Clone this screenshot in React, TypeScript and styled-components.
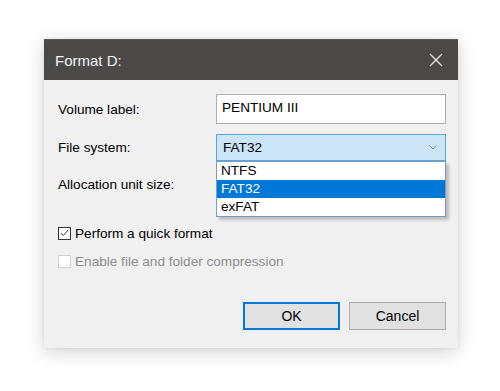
import React from 'react';
import styled, { createGlobalStyle } from 'styled-components';

const GlobalStyle = createGlobalStyle`
  html, body {
    margin: 0;
    padding: 0;
    background: #fff;
  }
  body {
    font-family: 'Liberation Sans', Arial, sans-serif;
  }
`;

const Page = styled.main`
  width: 500px;
  height: 391px;
  padding: 39px 0 0 44px;
  box-sizing: border-box;
`;

const Dialog = styled.section`
  width: 414px;
  height: 309px;
  background: #f0f0f0;
  box-shadow: 0 4px 18px rgba(0, 0, 0, 0.18), 0 0 3px rgba(0, 0, 0, 0.08);
  display: flex;
  flex-direction: column;
`;

const TitleBar = styled.header`
  height: 41px;
  background: #4b4a48;
  display: flex;
  align-items: center;
  justify-content: space-between;
  padding: 0 12px 0 11px;
  color: #f2f2f2;
  font-size: 15px;
  border-top: 1px solid #5a5958;
  box-sizing: border-box;
`;

const CloseButton = styled.button`
  width: 20px;
  height: 20px;
  padding: 0;
  border: none;
  background: none;
  display: flex;
  align-items: center;
  justify-content: center;
`;

const Body = styled.div`
  flex: 1;
  padding: 14px 12px 18px 14px;
  display: flex;
  flex-direction: column;
  font-size: 13.6px;
  color: #000;
`;

const Row = styled.div<{ $gap?: number }>`
  display: grid;
  grid-template-columns: 158px 230px;
  align-items: center;
  margin-bottom: ${(p) => p.$gap ?? 10}px;
`;

const Label = styled.label`
  white-space: nowrap;
`;

const TextInput = styled.div`
  height: 30px;
  box-sizing: border-box;
  border: 1px solid #adadad;
  background: #fff;
  padding: 4px 5px;
  line-height: 18px;
`;

const ComboWrap = styled.div`
  position: relative;
`;

const Combo = styled.div<{ $active?: boolean }>`
  height: 27px;
  box-sizing: border-box;
  border: 1px solid ${(p) => (p.$active ? '#5fa3dd' : '#adadad')};
  background: ${(p) => (p.$active ? '#cce4f7' : '#e5e5e5')};
  display: flex;
  align-items: center;
  justify-content: space-between;
  padding: 0 8px 0 6px;
`;

const DropList = styled.ul`
  position: absolute;
  left: 0;
  top: 27px;
  width: 230px;
  margin: 0;
  padding: 0;
  list-style: none;
  background: #fff;
  border: 1px solid #7a9cc0;
  box-sizing: border-box;
  box-shadow: 3px 3px 3px rgba(0, 0, 0, 0.22);
  z-index: 2;
`;

const DropItem = styled.li<{ $selected?: boolean }>`
  height: 18px;
  line-height: 18px;
  padding: 0 4px;
  background: ${(p) => (p.$selected ? '#0078d7' : '#fff')};
  color: ${(p) => (p.$selected ? '#fff' : '#000')};
`;

const CheckRow = styled.div<{ $disabled?: boolean }>`
  display: flex;
  align-items: center;
  gap: 4px;
  height: 20px;
  margin-bottom: 8px;
  color: ${(p) => (p.$disabled ? '#8e8e8e' : '#000')};
`;

const Box = styled.span<{ $disabled?: boolean }>`
  width: 13px;
  height: 13px;
  box-sizing: border-box;
  border: 1px solid ${(p) => (p.$disabled ? '#d2d2d2' : '#333')};
  background: #fff;
  display: flex;
  align-items: center;
  justify-content: center;
`;

const Buttons = styled.div`
  margin-top: auto;
  display: flex;
  justify-content: flex-end;
  gap: 9px;
`;

const Button = styled.button<{ $primary?: boolean }>`
  width: 97px;
  height: 28px;
  box-sizing: border-box;
  border: 1px solid ${(p) => (p.$primary ? '#0078d7' : '#adadad')};
  ${(p) => (p.$primary ? 'box-shadow: inset 0 0 0 1px #0078d7;' : '')}
  background: #e1e1e1;
  font-family: inherit;
  font-size: 14px;
  color: #000;
  padding: 0;
`;

export default function App() {
  return (
    <>
      <GlobalStyle />
      <Page>
        <Dialog>
          <TitleBar>
            <span>Format D:</span>
            <CloseButton aria-label="Close">
              <svg width="14" height="14" viewBox="0 0 14 14">
                <path d="M1 1 L13 13 M13 1 L1 13" stroke="#e8e8e8" strokeWidth="1.2" />
              </svg>
            </CloseButton>
          </TitleBar>
          <Body>
            <Row>
              <Label>Volume label:</Label>
              <TextInput>PENTIUM III</TextInput>
            </Row>
            <Row>
              <Label>File system:</Label>
              <ComboWrap>
                <Combo $active>
                  <span>FAT32</span>
                  <svg width="8" height="5" viewBox="0 0 8 5">
                    <path d="M0.5 0.5 L4 4 L7.5 0.5" fill="none" stroke="#8a8a8a" strokeWidth="1" />
                  </svg>
                </Combo>
                <DropList>
                  <DropItem>NTFS</DropItem>
                  <DropItem $selected>FAT32</DropItem>
                  <DropItem>exFAT</DropItem>
                </DropList>
              </ComboWrap>
            </Row>
            <Row $gap={25}>
              <Label>Allocation unit size:</Label>
              <Combo />
            </Row>
            <CheckRow>
              <Box>
                <svg width="9" height="8" viewBox="0 0 9 8">
                  <path d="M0.8 4 L3.3 6.6 L8.3 0.8" fill="none" stroke="#333" strokeWidth="1" />
                </svg>
              </Box>
              <span>Perform a quick format</span>
            </CheckRow>
            <CheckRow $disabled>
              <Box $disabled />
              <span>Enable file and folder compression</span>
            </CheckRow>
            <Buttons>
              <Button $primary>OK</Button>
              <Button>Cancel</Button>
            </Buttons>
          </Body>
        </Dialog>
      </Page>
    </>
  );
}
